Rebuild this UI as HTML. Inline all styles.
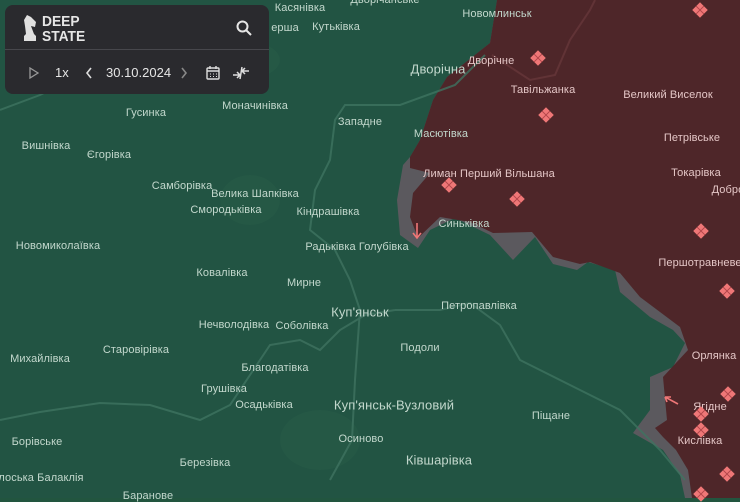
<!DOCTYPE html>
<html><head><meta charset="utf-8"><style>
html,body{margin:0;width:740px;height:498px;overflow:hidden;background:#22553f;font-family:"Liberation Sans","DejaVu Sans",sans-serif;}
.m{position:absolute;left:0;top:0}
.l{position:absolute;font-size:11px;color:#c3d8cd;white-space:nowrap;transform:translate(-50%,-50%);letter-spacing:0.1px}
.r{color:#e4c6c6}
.b{font-size:13px}
.d{position:absolute;width:11px;height:11px;background:#ef7777;transform:translate(-50%,-50%) rotate(45deg);
background-image:linear-gradient(90deg,transparent 5px,#b84a4e 5px,#b84a4e 6px,transparent 6px),linear-gradient(0deg,transparent 5px,#b84a4e 5px,#b84a4e 6px,transparent 6px)}
.panel{position:absolute;left:5px;top:5px;width:264px;height:89px;background:#2a2a2e;border-radius:8px;color:#e6e6e6}
</style></head><body>
<svg class="m" width="740" height="498">
<rect width="740" height="498" fill="#225443"/>
<g fill="#285b48" opacity="0.5">
<ellipse cx="240" cy="60" rx="40" ry="20"/><ellipse cx="250" cy="200" rx="30" ry="25"/><ellipse cx="320" cy="440" rx="40" ry="30"/>
</g>
<path d="M497,0 L740,0 L740,498 L685,498 L680,475 L663,450 L633,433 L650,410 L650,377 L673,367 L685,343 L673,330 L650,317 L620,292 L615,270 L588,262 L577,270 L553,264 L535,237 L513,260 L490,235 L455,218 L430,230 L418,248 L400,235 L397,200 L403,165 L410,157 L420,140 L433,100 L447,77 L490,43 Z" fill="#5b595e"/>
<path d="M497,0 L740,0 L740,498 L692,498 L688,470 L676,450 L663,437 L655,428 L667,420 L663,377 L688,350 L680,327 L640,297 L620,273 L590,262 L580,264 L553,257 L532,232 L493,233 L470,222 L440,217 L418,238 L410,217 L413,193 L430,173 L410,168 L410,157 L420,140 L433,100 L447,77 L490,43 Z" fill="#4e2629"/>
<g fill="none" stroke="#3f7360" stroke-width="2" opacity="0.8">
<path d="M0,420 L40,412 L100,403 L150,405 L200,420 L230,405 L250,375 L270,345 L300,340 L320,350 L340,330 L365,315 L395,310"/>
<path d="M485,55 L455,85 L400,105 L345,105 L335,120 L330,160 L315,190 L310,230 L335,250 L350,280 L360,310 L355,380 L352,440 L330,480"/>
<path d="M395,310 L440,310 L470,303 L500,325 L520,360 L580,390 L620,410 L660,450 L685,480"/>
<path d="M0,110 L40,95 L90,70 L130,60"/>
</g>
<g fill="none" stroke="#6a393c" stroke-width="2" opacity="0.7">
<path d="M492,55 L530,80 L555,75 L570,40 L590,10 L595,0"/>
</g>
</svg>
<div class="panel">
<svg style="position:absolute;left:17px;top:9px" width="18" height="28" viewBox="0 0 18 28"><path d="M5,1 L9,3 L14,8 L13,13 L9,12 L12,20 L14,22 L14,27 L2,27 L2,22 L4,20 L3,12 L2,6 Z" fill="#e0e0e0"/></svg>
<div style="position:absolute;left:37px;top:9px;font-weight:bold;font-size:15px;line-height:15px;transform:scaleX(0.92);transform-origin:left">DEEP<br>STATE</div>
<svg style="position:absolute;left:231px;top:15px" width="16" height="16"><circle cx="6.5" cy="6.5" r="5" fill="none" stroke="#e6e6e6" stroke-width="2"/><path d="M10,10 L15,15" stroke="#e6e6e6" stroke-width="2"/></svg>
<div style="position:absolute;left:0;top:44px;width:264px;height:1px;background:#47474c"></div>
<svg style="position:absolute;left:24px;top:62px" width="10" height="12"><path d="M1,1 L9,6 L1,11 Z" fill="none" stroke="#999" stroke-width="1.3"/></svg>
<div style="position:absolute;left:50px;top:60px;font-size:13px">1x</div>
<svg style="position:absolute;left:80px;top:62px" width="8" height="12"><path d="M6,1 L2,6 L6,11" fill="none" stroke="#ddd" stroke-width="1.6"/></svg>
<div style="position:absolute;left:101px;top:60px;font-size:13px">30.10.2024</div>
<svg style="position:absolute;left:175px;top:62px" width="8" height="12"><path d="M2,1 L6,6 L2,11" fill="none" stroke="#888" stroke-width="1.6"/></svg>
<svg style="position:absolute;left:201px;top:61px" width="14" height="14"><rect x="1" y="2" width="12" height="11" rx="1" fill="none" stroke="#ddd" stroke-width="1.4"/><path d="M1,5 H13 M4,0 V3 M10,0 V3" stroke="#ddd" stroke-width="1.4"/><path d="M4,8 h1 M7,8 h1 M10,8 h1 M4,10.5 h1 M7,10.5 h1 M10,10.5 h1" stroke="#ddd"/></svg>
<svg style="position:absolute;left:227px;top:60px" width="18" height="16"><path d="M1,10 H8 M5,7 L8,10 L5,13 M17,6 H10 M13,3 L10,6 L13,9 M8,14 L10,2" stroke="#ddd" stroke-width="1.5" fill="none"/></svg>
</div>
<div class="l" style="left:300px;top:8px">Касянівка</div>
<div class="l" style="left:385px;top:0px">Дворічанське</div>
<div class="l" style="left:285px;top:28px">ерша</div>
<div class="l" style="left:336px;top:27px">Кутьківка</div>
<div class="l" style="left:497px;top:14px">Новомлинськ</div>
<div class="l b" style="left:438px;top:69px">Дворічна</div>
<div class="l r" style="left:491px;top:61px">Дворічне</div>
<div class="l r" style="left:543px;top:90px">Тавільжанка</div>
<div class="l r" style="left:668px;top:95px">Великий Виселок</div>
<div class="l r" style="left:692px;top:138px">Петрівське</div>
<div class="l r" style="left:696px;top:173px">Токарівка</div>
<div class="l r" style="left:728px;top:190px">Добро</div>
<div class="l" style="left:441px;top:134px">Масютівка</div>
<div class="l r" style="left:489px;top:174px">Лиман Перший Вільшана</div>
<div class="l" style="left:464px;top:224px">Синьківка</div>
<div class="l r" style="left:700px;top:263px">Першотравневе</div>
<div class="l r" style="left:714px;top:356px">Орлянка</div>
<div class="l r" style="left:710px;top:407px">Ягідне</div>
<div class="l r" style="left:700px;top:441px">Кислівка</div>
<div class="l" style="left:360px;top:122px">Западне</div>
<div class="l" style="left:255px;top:106px">Моначинівка</div>
<div class="l" style="left:146px;top:113px">Гусинка</div>
<div class="l" style="left:46px;top:146px">Вишнівка</div>
<div class="l" style="left:109px;top:155px">Єгорівка</div>
<div class="l" style="left:182px;top:186px">Самборівка</div>
<div class="l" style="left:255px;top:194px">Велика Шапківка</div>
<div class="l" style="left:226px;top:210px">Смородьківка</div>
<div class="l" style="left:328px;top:212px">Кіндрашівка</div>
<div class="l" style="left:357px;top:247px">Радьківка Голубівка</div>
<div class="l" style="left:58px;top:246px">Новомиколаївка</div>
<div class="l" style="left:222px;top:273px">Ковалівка</div>
<div class="l" style="left:304px;top:283px">Мирне</div>
<div class="l b" style="left:360px;top:312px">Куп'янськ</div>
<div class="l" style="left:234px;top:325px">Нечволодівка</div>
<div class="l" style="left:302px;top:326px">Соболівка</div>
<div class="l" style="left:479px;top:306px">Петропавлівка</div>
<div class="l" style="left:420px;top:348px">Подоли</div>
<div class="l" style="left:136px;top:350px">Старовірівка</div>
<div class="l" style="left:40px;top:359px">Михайлівка</div>
<div class="l" style="left:275px;top:368px">Благодатівка</div>
<div class="l" style="left:224px;top:389px">Грушівка</div>
<div class="l" style="left:264px;top:405px">Осадьківка</div>
<div class="l b" style="left:394px;top:405px">Куп'янськ-Вузловий</div>
<div class="l" style="left:551px;top:416px">Піщане</div>
<div class="l" style="left:361px;top:439px">Осиново</div>
<div class="l" style="left:37px;top:442px">Борівське</div>
<div class="l b" style="left:439px;top:460px">Ківшарівка</div>
<div class="l" style="left:205px;top:463px">Березівка</div>
<div class="l" style="left:38px;top:478px">олоська Балаклія</div>
<div class="l" style="left:148px;top:496px">Баранове</div>
<div class="d" style="left:538px;top:58px"></div>
<div class="d" style="left:546px;top:115px"></div>
<div class="d" style="left:449px;top:185px"></div>
<div class="d" style="left:517px;top:199px"></div>
<div class="d" style="left:700px;top:10px"></div>
<div class="d" style="left:701px;top:231px"></div>
<div class="d" style="left:727px;top:291px"></div>
<div class="d" style="left:728px;top:394px"></div>
<div class="d" style="left:701px;top:414px"></div>
<div class="d" style="left:701px;top:430px"></div>
<div class="d" style="left:727px;top:474px"></div>
<div class="d" style="left:701px;top:494px"></div>
<svg style="position:absolute;left:411px;top:222px" width="12" height="18"><path d="M6,1 V16 M2,11 L6,16 L10,11" fill="none" stroke="#ef7777" stroke-width="1.6"/></svg>
<svg style="position:absolute;left:662px;top:394px" width="18" height="12"><path d="M16,10 L3,3 M3,3 L9,3 M3,3 L5,8" fill="none" stroke="#ef7777" stroke-width="1.6"/></svg>
</body></html>
